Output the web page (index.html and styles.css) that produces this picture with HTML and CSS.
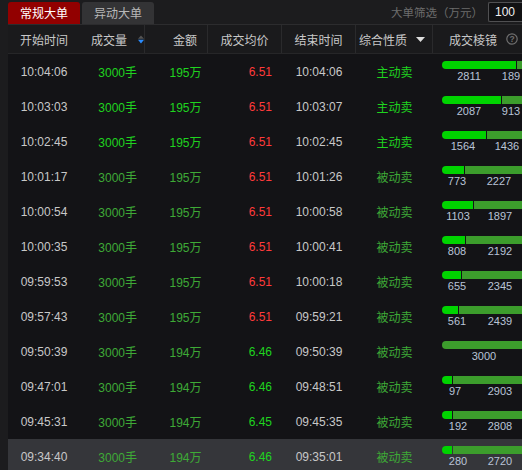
FILE: index.html
```html
<!DOCTYPE html>
<html lang="zh">
<head>
<meta charset="utf-8">
<link rel="stylesheet" href="styles.css">
</head>
<body>
<div class="page">
  <div class="topbar">
    <div class="tabs">
      <div class="tab active">常规大单</div>
      <div class="tab">异动大单</div>
    </div>
    <div class="filter">
      <span class="filter-label">大单筛选（万元）</span>
      <div class="filter-input">100</div>
    </div>
  </div>
  <div class="table">
    <div class="row head">
      <div class="cell c1">开始时间</div>
      <div class="cell c2"><span>成交量</span>
        <svg class="sort" width="8" height="11" viewBox="0 0 8 11"><path d="M4 0 L8 4.5 L0 4.5 Z" fill="#555"/><path d="M0 6 L8 6 L4 11 Z" fill="#2a8cff"/></svg>
      </div>
      <div class="cell c3">金额</div>
      <div class="cell c4">成交均价</div>
      <div class="cell c5">结束时间</div>
      <div class="cell c6"><span>综合性质</span>
        <svg class="caret" width="9" height="5" viewBox="0 0 9 5"><path d="M0 0 L9 0 L4.5 5 Z" fill="#ddd"/></svg>
      </div>
      <div class="cell c7"><span>成交棱镜</span>
        <svg class="help" width="12" height="12" viewBox="0 0 12 12"><circle cx="6" cy="6" r="5.2" fill="none" stroke="#707070" stroke-width="1.2"/><text x="6" y="9" text-anchor="middle" font-size="8.5" font-family="Liberation Sans, sans-serif" font-weight="bold" fill="#707070">?</text></svg>
      </div>
    </div>

    <div class="row">
      <div class="cell c1">10:04:06</div>
      <div class="cell c2 g1">3000手</div>
      <div class="cell c3 g1">195万</div>
      <div class="cell c4 red">6.51</div>
      <div class="cell c5">10:04:06</div>
      <div class="cell c6 g1">主动卖</div>
      <div class="cell c7"><div class="prism"><div class="bar"><div class="seg s1" style="width:74px"></div><div class="seg s2" style="width:10px"></div></div><div class="labels"><span style="margin-left:12px">2811</span><span style="margin-left:12px">189</span></div></div></div>
    </div>
    <div class="row">
      <div class="cell c1">10:03:03</div>
      <div class="cell c2 g1">3000手</div>
      <div class="cell c3 g1">195万</div>
      <div class="cell c4 red">6.51</div>
      <div class="cell c5">10:03:07</div>
      <div class="cell c6 g1">主动卖</div>
      <div class="cell c7"><div class="prism"><div class="bar"><div class="seg s1" style="width:59px"></div><div class="seg s2" style="width:25px"></div></div><div class="labels"><span style="margin-left:12px">2087</span><span style="margin-left:12px">913</span></div></div></div>
    </div>
    <div class="row">
      <div class="cell c1">10:02:45</div>
      <div class="cell c2 g1">3000手</div>
      <div class="cell c3 g1">195万</div>
      <div class="cell c4 red">6.51</div>
      <div class="cell c5">10:02:45</div>
      <div class="cell c6 g1">主动卖</div>
      <div class="cell c7"><div class="prism"><div class="bar"><div class="seg s1" style="width:44px"></div><div class="seg s2" style="width:40px"></div></div><div class="labels"><span style="margin-left:6px">1564</span><span style="margin-left:14px">1436</span></div></div></div>
    </div>
    <div class="row">
      <div class="cell c1">10:01:17</div>
      <div class="cell c2 g2">3000手</div>
      <div class="cell c3 g2">195万</div>
      <div class="cell c4 red">6.51</div>
      <div class="cell c5">10:01:26</div>
      <div class="cell c6 g2">被动卖</div>
      <div class="cell c7"><div class="prism"><div class="bar"><div class="seg s1" style="width:22px"></div><div class="seg s2" style="width:62px"></div></div><div class="labels"><span style="margin-left:0px">773</span><span style="margin-left:12px">2227</span></div></div></div>
    </div>
    <div class="row">
      <div class="cell c1">10:00:54</div>
      <div class="cell c2 g2">3000手</div>
      <div class="cell c3 g2">195万</div>
      <div class="cell c4 red">6.51</div>
      <div class="cell c5">10:00:58</div>
      <div class="cell c6 g2">被动卖</div>
      <div class="cell c7"><div class="prism"><div class="bar"><div class="seg s1" style="width:31px"></div><div class="seg s2" style="width:53px"></div></div><div class="labels"><span style="margin-left:1px">1103</span><span style="margin-left:12px">1897</span></div></div></div>
    </div>
    <div class="row">
      <div class="cell c1">10:00:35</div>
      <div class="cell c2 g2">3000手</div>
      <div class="cell c3 g2">195万</div>
      <div class="cell c4 red">6.51</div>
      <div class="cell c5">10:00:41</div>
      <div class="cell c6 g2">被动卖</div>
      <div class="cell c7"><div class="prism"><div class="bar"><div class="seg s1" style="width:23px"></div><div class="seg s2" style="width:61px"></div></div><div class="labels"><span style="margin-left:0px">808</span><span style="margin-left:13px">2192</span></div></div></div>
    </div>
    <div class="row">
      <div class="cell c1">09:59:53</div>
      <div class="cell c2 g2">3000手</div>
      <div class="cell c3 g2">195万</div>
      <div class="cell c4 red">6.51</div>
      <div class="cell c5">10:00:18</div>
      <div class="cell c6 g2">被动卖</div>
      <div class="cell c7"><div class="prism"><div class="bar"><div class="seg s1" style="width:19px"></div><div class="seg s2" style="width:65px"></div></div><div class="labels"><span style="margin-left:0px">655</span><span style="margin-left:13px">2345</span></div></div></div>
    </div>
    <div class="row">
      <div class="cell c1">09:57:43</div>
      <div class="cell c2 g2">3000手</div>
      <div class="cell c3 g2">195万</div>
      <div class="cell c4 red">6.51</div>
      <div class="cell c5">09:59:21</div>
      <div class="cell c6 g2">被动卖</div>
      <div class="cell c7"><div class="prism"><div class="bar"><div class="seg s1" style="width:16px"></div><div class="seg s2" style="width:68px"></div></div><div class="labels"><span style="margin-left:0px">561</span><span style="margin-left:13px">2439</span></div></div></div>
    </div>
    <div class="row">
      <div class="cell c1">09:50:39</div>
      <div class="cell c2 g2">3000手</div>
      <div class="cell c3 g2">194万</div>
      <div class="cell c4 g1">6.46</div>
      <div class="cell c5">09:50:39</div>
      <div class="cell c6 g2">被动卖</div>
      <div class="cell c7"><div class="prism"><div class="bar"><div class="seg s2 only" style="width:85px"></div></div><div class="labels"><span style="margin-left:27px">3000</span></div></div></div>
    </div>
    <div class="row">
      <div class="cell c1">09:47:01</div>
      <div class="cell c2 g2">3000手</div>
      <div class="cell c3 g2">194万</div>
      <div class="cell c4 g1">6.46</div>
      <div class="cell c5">09:48:51</div>
      <div class="cell c6 g2">被动卖</div>
      <div class="cell c7"><div class="prism"><div class="bar"><div class="seg s1" style="width:10px"></div><div class="seg s2" style="width:74px"></div></div><div class="labels"><span style="margin-left:-2px">97</span><span style="margin-left:15px">2903</span></div></div></div>
    </div>
    <div class="row">
      <div class="cell c1">09:45:31</div>
      <div class="cell c2 g2">3000手</div>
      <div class="cell c3 g2">194万</div>
      <div class="cell c4 g1">6.45</div>
      <div class="cell c5">09:45:35</div>
      <div class="cell c6 g2">被动卖</div>
      <div class="cell c7"><div class="prism"><div class="bar"><div class="seg s1" style="width:10px"></div><div class="seg s2" style="width:74px"></div></div><div class="labels"><span style="margin-left:1px">192</span><span style="margin-left:12px">2808</span></div></div></div>
    </div>
    <div class="row hover">
      <div class="cell c1">09:34:40</div>
      <div class="cell c2 g2">3000手</div>
      <div class="cell c3 g2">194万</div>
      <div class="cell c4 g1">6.46</div>
      <div class="cell c5">09:35:01</div>
      <div class="cell c6 g2">被动卖</div>
      <div class="cell c7"><div class="prism"><div class="bar"><div class="seg s1" style="width:10px"></div><div class="seg s2" style="width:74px"></div></div><div class="labels"><span style="margin-left:1px">280</span><span style="margin-left:12px">2720</span></div></div></div>
    </div>
  </div>
</div>
</body>
</html>
```

FILE: styles.css
```css
html, body {
  margin: 0;
  padding: 0;
  background: #1c1c1e;
}
body {
  width: 522px;
  height: 470px;
  overflow: hidden;
  font-family: "Liberation Sans", "Noto Sans CJK SC", sans-serif;
  font-size: 12px;
  color: #c8c8c8;
}
.page {
  width: 522px;
  padding-left: 8px;
  box-sizing: border-box;
}
.topbar {
  height: 24px;
  display: flex;
  justify-content: space-between;
  align-items: flex-start;
}
.tabs {
  display: flex;
  gap: 2px;
  padding-top: 2px;
}
.tab {
  width: 72px;
  height: 22px;
  line-height: 22px;
  text-align: center;
  background: #333335;
  color: #b8b8b8;
  border-radius: 3px 3px 0 0;
  font-family: "Noto Sans CJK SC", sans-serif;
  font-size: 12px;
}
.tab.active {
  background: #920000;
  color: #ffffff;
}
.filter {
  display: flex;
  align-items: center;
  padding-top: 2px;
  gap: 5px;
}
.filter-label {
  color: #6c6c6c;
  font-family: "Noto Sans CJK SC", sans-serif;
  font-size: 11.5px;
  line-height: 20px;
}
.filter-input {
  width: 34px;
  height: 20px;
  box-sizing: border-box;
  border: 1px solid #505052;
  border-right: none;
  border-radius: 2px 0 0 2px;
  background: #111113;
  color: #f0f0f0;
  line-height: 18px;
  padding-left: 6px;
  font-size: 12px;
}
.table {
  background: #131316;
}
.row {
  display: grid;
  grid-template-columns: 72px 65px 63px 74px 74px 77px 1fr;
  height: 35px;
  align-items: center;
}
.row.head {
  height: 30px;
  background: #1a1a1c;
  border-top: 1px solid #2c2c2e;
  border-bottom: 1px solid #262628;
  box-sizing: border-box;
  color: #c8c8c8;
  font-family: "Noto Sans CJK SC", sans-serif;
  align-items: stretch;
}
.row.head .cell {
  display: flex;
  align-items: center;
}
.row.head .c2, .row.head .c3, .row.head .c4, .row.head .c5, .row.head .c6 {
  border-right: 1px solid #2a2a2c;
}
.row.hover {
  background: #35363a;
}
.cell {
  white-space: nowrap;
}
.c1 { text-align: center; justify-content: center; }
.c2 { text-align: right; padding-right: 8px; }
.row.head .c2 { padding: 0 0 0 11px; gap: 11px; }
.c3 { text-align: center; justify-content: center; padding-left: 18px; }
.c4 { text-align: right; padding-right: 10px; }
.row.head .c4 { justify-content: center; padding: 0; }
.c5 { text-align: center; justify-content: center; }
.c6 { text-align: center; justify-content: center; font-family: "Noto Sans CJK SC", sans-serif; }
.row.head .c6 { gap: 9px; padding-left: 2px; justify-content: flex-start; padding-left: 3px; }
.c7 { padding-left: 9px; }
.row.head .c7 { padding-left: 16px; gap: 9px; }
.c2, .c3 { font-family: "Liberation Sans", "Noto Sans CJK SC", sans-serif; }
.g1 { color: #1fd41f; }
.g2 { color: #3eaa36; }
.red { color: #ff3a3a; }
.prism {
  display: flex;
  flex-direction: column;
  padding-top: 1px;
}
.bar {
  display: flex;
  gap: 1px;
  height: 8px;
}
.seg { height: 8px; }
.s1 {
  background: #00d400;
  border-radius: 4px 0 0 4px;
}
.s2 { background: #3c9d2c; }
.s2.only { border-radius: 4px 0 0 4px; }
.labels {
  display: flex;
  height: 13px;
  margin-top: 1px;
  font-family: "Liberation Sans", sans-serif;
  font-size: 11px;
  line-height: 13px;
  color: #b9c3d6;
}
.labels span {
  width: 30px;
  flex: none;
  text-align: center;
}
```
